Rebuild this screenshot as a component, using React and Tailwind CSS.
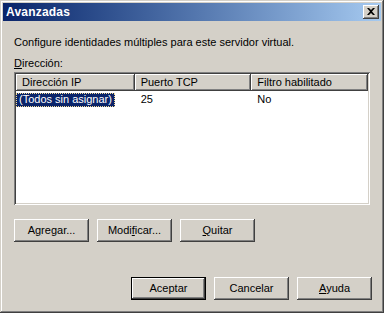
import React from "react";

const raised = "shadow-[inset_-1px_-1px_#404040,inset_1px_1px_#ffffff,inset_-2px_-2px_#808080,inset_2px_2px_#d4d0c8]";

const Btn = ({ children, isDefault }) => (
  <div
    className={
      isDefault
        ? "w-[75px] h-[23px] flex items-center justify-center bg-[#d4d0c8] border border-black shadow-[inset_-1px_-1px_#404040,inset_1px_1px_#ffffff,inset_-2px_-2px_#808080]"
        : "w-[75px] h-[23px] flex items-center justify-center bg-[#d4d0c8] shadow-[inset_-1px_-1px_#404040,inset_1px_1px_#ffffff,inset_-2px_-2px_#808080,inset_2px_2px_#d4d0c8]"
    }
  >
    <span className="text-black leading-none">{children}</span>
  </div>
);

const HeaderCell = ({ children, w }) => (
  <div className={`h-[17px] flex items-center pl-[6px] ${raised} ${w}`}>{children}</div>
);

const App = () => {
  return (
    <div
      className="w-[384px] h-[313px] bg-[#d4d0c8] flex flex-col p-[3px] text-[11px] text-black shadow-[inset_-1px_-1px_#404040,inset_1px_1px_#d4d0c8,inset_-2px_-2px_#808080,inset_2px_2px_#ffffff]"
      style={{ fontFamily: '"Liberation Sans", Arial, sans-serif' }}
    >
      {/* title bar */}
      <div className="h-[18px] flex items-center justify-between pl-[3px] pr-[2px] bg-gradient-to-r from-[#0a246a] to-[#a6caf0]">
        <span className="text-white font-bold text-[12px] tracking-[0.2px]">Avanzadas</span>
        <div className="w-[16px] h-[14px] flex items-center justify-center bg-[#d4d0c8] shadow-[inset_-1px_-1px_#404040,inset_1px_1px_#ffffff,inset_-2px_-2px_#808080,inset_2px_2px_#d4d0c8]">
          <svg width="8" height="7" viewBox="0 0 8 7" className="mb-[1px]">
            <path d="M0 0h2l2 2 2-2h2L5 3.5 8 7H6L4 5 2 7H0l3-3.5z" fill="black" />
          </svg>
        </div>
      </div>

      <div className="flex flex-col px-[11px]">
        <p className="mt-[15px] leading-[13px]">Configure identidades múltiples para este servidor virtual.</p>
        <p className="mt-[8px] leading-[13px]">
          <span className="underline">D</span>irección:
        </p>

        {/* list view */}
        <div className="mt-[2px] h-[133px] bg-white p-[2px] flex flex-col shadow-[inset_1px_1px_#808080,inset_-1px_-1px_#ffffff,inset_2px_2px_#404040,inset_-2px_-2px_#d4d0c8]">
          <div className="flex bg-[#d4d0c8]">
            <HeaderCell w="w-[119px]">Dirección IP</HeaderCell>
            <HeaderCell w="w-[117px]">Puerto TCP</HeaderCell>
            <HeaderCell w="w-[117px]">Filtro habilitado</HeaderCell>
            <div className="flex-1 bg-white" />
          </div>
          <div className="flex h-[15px] items-center mt-[1px]">
            <div className="w-[119px]">
              <span className="inline-flex items-center h-[14px] px-[2px] bg-[#0a246a] text-white border border-dotted border-[#f5db95]">
                (Todos sin asignar)
              </span>
            </div>
            <div className="w-[117px] pl-[6px]">25</div>
            <div className="w-[117px] pl-[6px]">No</div>
          </div>
        </div>

        <div className="flex gap-[8px] mt-[14px]">
          <Btn>
            A<span className="underline">g</span>regar...
          </Btn>
          <Btn>
            Modi<span className="underline">f</span>icar...
          </Btn>
          <Btn>
            <span className="underline">Q</span>uitar
          </Btn>
        </div>

        <div className="flex gap-[8px] justify-end mt-[35px] -mr-[2px]">
          <Btn isDefault>Aceptar</Btn>
          <Btn>Cancelar</Btn>
          <Btn>
            <span className="underline">A</span>yuda
          </Btn>
        </div>
      </div>
    </div>
  );
};

export default App;
